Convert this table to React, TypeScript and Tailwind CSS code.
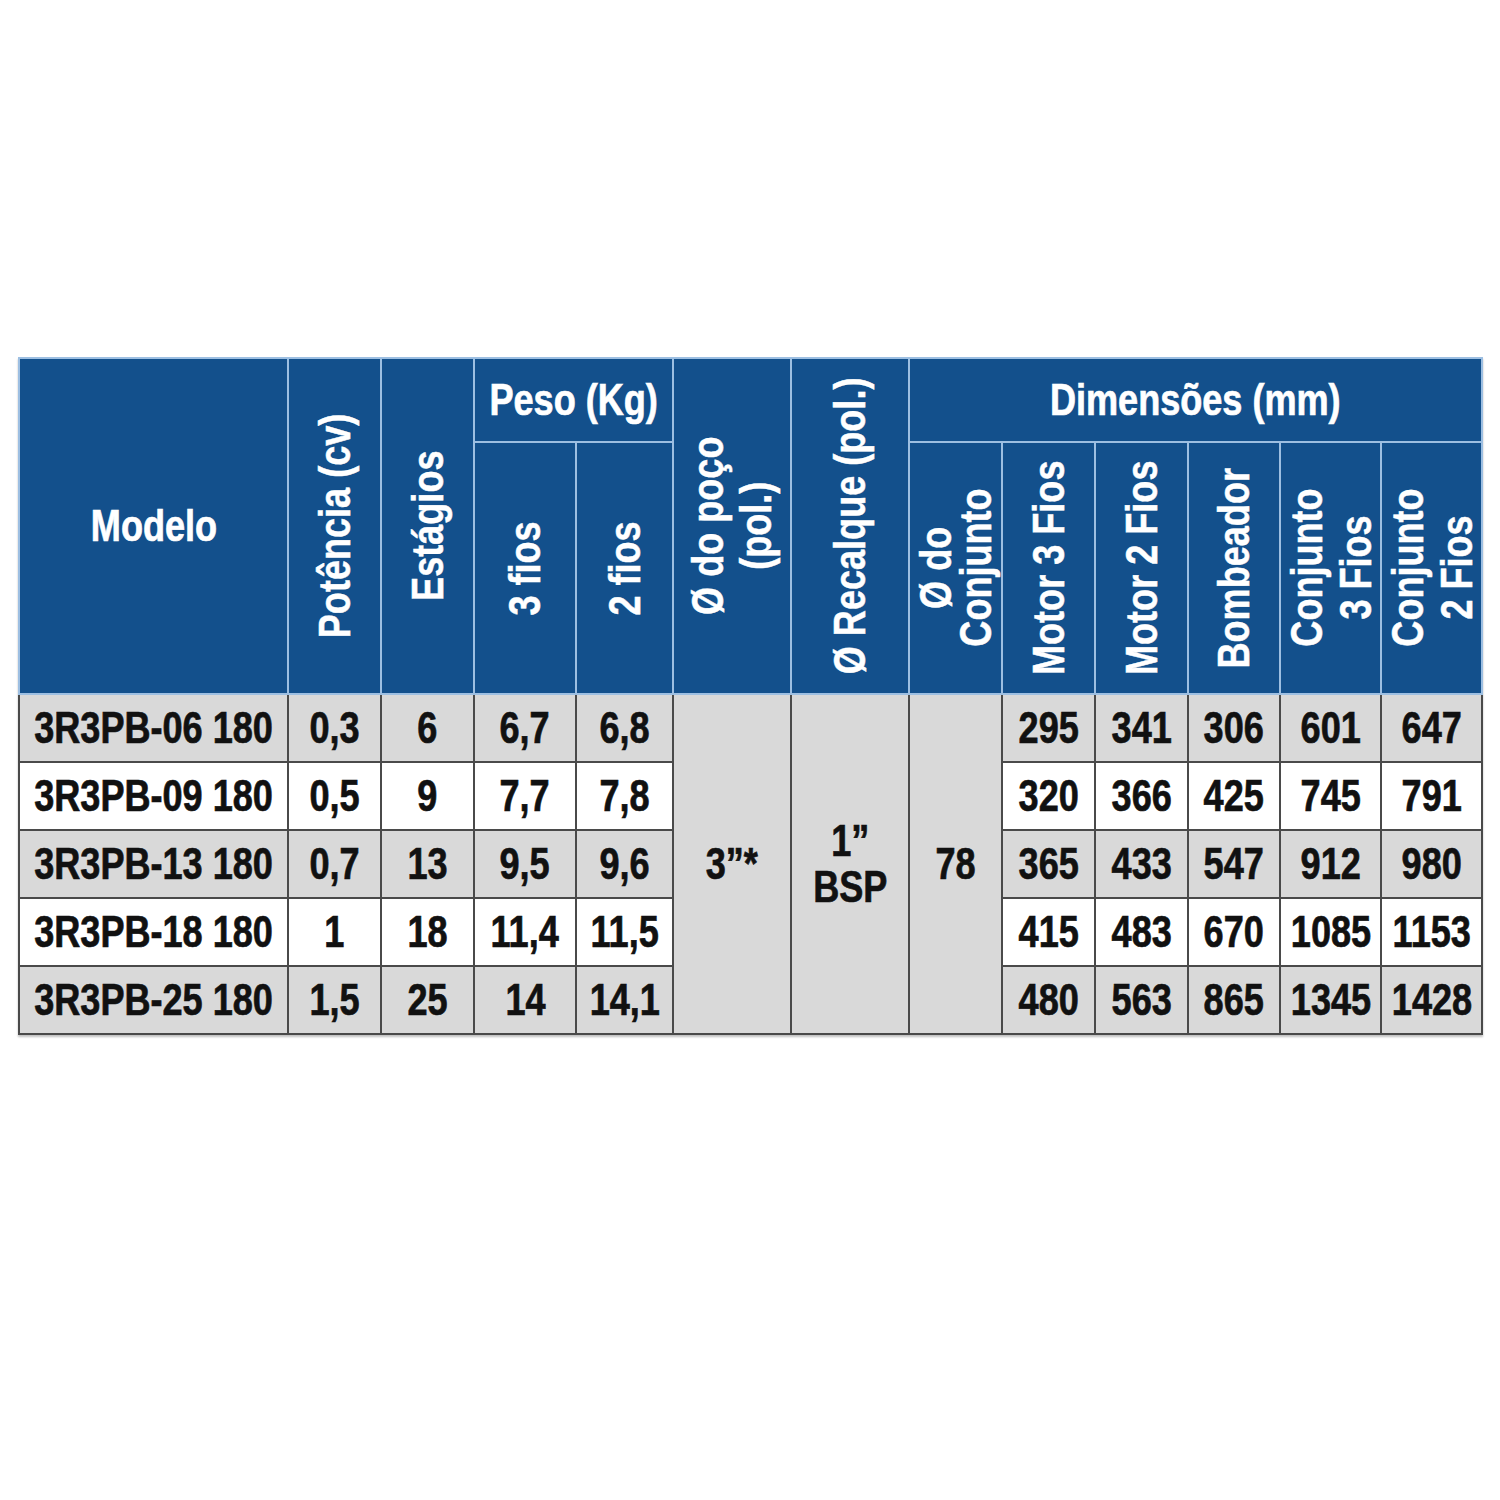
import React from 'react';

const rows = [
  { modelo: '3R3PB-06 180', pot: '0,3', est: '6', p3: '6,7', p2: '6,8', dims: ['295', '341', '306', '601', '647'] },
  { modelo: '3R3PB-09 180', pot: '0,5', est: '9', p3: '7,7', p2: '7,8', dims: ['320', '366', '425', '745', '791'] },
  { modelo: '3R3PB-13 180', pot: '0,7', est: '13', p3: '9,5', p2: '9,6', dims: ['365', '433', '547', '912', '980'] },
  { modelo: '3R3PB-18 180', pot: '1', est: '18', p3: '11,4', p2: '11,5', dims: ['415', '483', '670', '1085', '1153'] },
  { modelo: '3R3PB-25 180', pot: '1,5', est: '25', p3: '14', p2: '14,1', dims: ['480', '563', '865', '1345', '1428'] },
];

const colWidths = [269, 93, 93, 102, 97, 118, 118, 93, 93, 93, 92, 101, 101];

// condensed look: Liberation Sans squeezed to Arial Narrow proportions
function Narrow({ children, className = '' }: { children: React.ReactNode; className?: string }) {
  return (
    <div className="flex w-full justify-center">
      <span className={`whitespace-nowrap text-center scale-x-[0.82] [-webkit-text-stroke:0.7px_currentColor] ${className}`}>{children}</span>
    </div>
  );
}

function Vertical({ children, h, lead = 'leading-[38px]' }: { children: React.ReactNode; h: string; lead?: string }) {
  return (
    <div className={`flex w-full items-center justify-center ${h}`}>
      <span className={`[writing-mode:vertical-rl] rotate-180 scale-y-[0.82] text-center whitespace-nowrap [-webkit-text-stroke:0.5px_currentColor] ${lead}`}>
        {children}
      </span>
    </div>
  );
}

const th = 'bg-[#13508c] text-white border-2 border-[#9dbfe2] p-0 font-bold text-[44px] leading-none align-middle';
const td = 'border-2 border-[#4a4a4a] p-0 text-center align-middle font-bold text-[44px] text-[#111] leading-none';

export default function App() {
  return (
    <div className="min-h-screen bg-white pt-[357px] pl-[18px]" style={{ fontFamily: '"Liberation Sans", Arial, sans-serif' }}>
      <table className="border-collapse table-fixed w-[1465px] shadow-[0_2px_2px_rgba(0,0,0,0.25)]">
        <colgroup>
          {colWidths.map((w, i) => (
            <col key={i} style={{ width: w }} />
          ))}
        </colgroup>
        <thead>
          <tr className="h-[84px]">
            <th rowSpan={2} className={th}><Narrow className="[-webkit-text-stroke:0.5px_currentColor]">Modelo</Narrow></th>
            <th rowSpan={2} className={th}><Vertical h="h-[320px]">Potência (cv)</Vertical></th>
            <th rowSpan={2} className={th}><Vertical h="h-[320px]">Estágios</Vertical></th>
            <th colSpan={2} className={th}><Narrow className="[-webkit-text-stroke:0.5px_currentColor]">Peso (Kg)</Narrow></th>
            <th rowSpan={2} className={th}><Vertical h="h-[320px]" lead="leading-[48px]">Ø do poço<br />(pol.)</Vertical></th>
            <th rowSpan={2} className={th}><Vertical h="h-[320px]">Ø Recalque (pol.)</Vertical></th>
            <th colSpan={6} className={th}><Narrow className="[-webkit-text-stroke:0.5px_currentColor]">Dimensões (mm)</Narrow></th>
          </tr>
          <tr className="h-[252px]">
            <th className={th}><Vertical h="h-[240px]">3 fios</Vertical></th>
            <th className={th}><Vertical h="h-[240px]">2 fios</Vertical></th>
            <th className={th}><Vertical h="h-[240px]" lead="leading-[40px]">Ø do<br />Conjunto</Vertical></th>
            <th className={th}><Vertical h="h-[240px]">Motor 3 Fios</Vertical></th>
            <th className={th}><Vertical h="h-[240px]">Motor 2 Fios</Vertical></th>
            <th className={th}><Vertical h="h-[240px]">Bombeador</Vertical></th>
            <th className={th}><Vertical h="h-[240px]" lead="leading-[49px]">Conjunto<br />3 Fios</Vertical></th>
            <th className={th}><Vertical h="h-[240px]" lead="leading-[49px]">Conjunto<br />2 Fios</Vertical></th>
          </tr>
        </thead>
        <tbody>
          {rows.map((r, i) => {
            const bg = i % 2 === 0 ? 'bg-[#d9d9d9]' : 'bg-white';
            return (
              <tr key={r.modelo} className="h-[68px]">
                <td className={`${td} ${bg}`}><Narrow>{r.modelo}</Narrow></td>
                <td className={`${td} ${bg}`}><Narrow>{r.pot}</Narrow></td>
                <td className={`${td} ${bg}`}><Narrow>{r.est}</Narrow></td>
                <td className={`${td} ${bg}`}><Narrow>{r.p3}</Narrow></td>
                <td className={`${td} ${bg}`}><Narrow>{r.p2}</Narrow></td>
                {i === 0 && (
                  <>
                    <td rowSpan={5} className={`${td} bg-[#d9d9d9]`}><Narrow>3”*</Narrow></td>
                    <td rowSpan={5} className={`${td} bg-[#d9d9d9]`}><Narrow className="leading-[46px]">1”<br />BSP</Narrow></td>
                    <td rowSpan={5} className={`${td} bg-[#d9d9d9]`}><Narrow>78</Narrow></td>
                  </>
                )}
                {r.dims.map((d, j) => (
                  <td key={j} className={`${td} ${bg}`}><Narrow>{d}</Narrow></td>
                ))}
              </tr>
            );
          })}
        </tbody>
      </table>
    </div>
  );
}
